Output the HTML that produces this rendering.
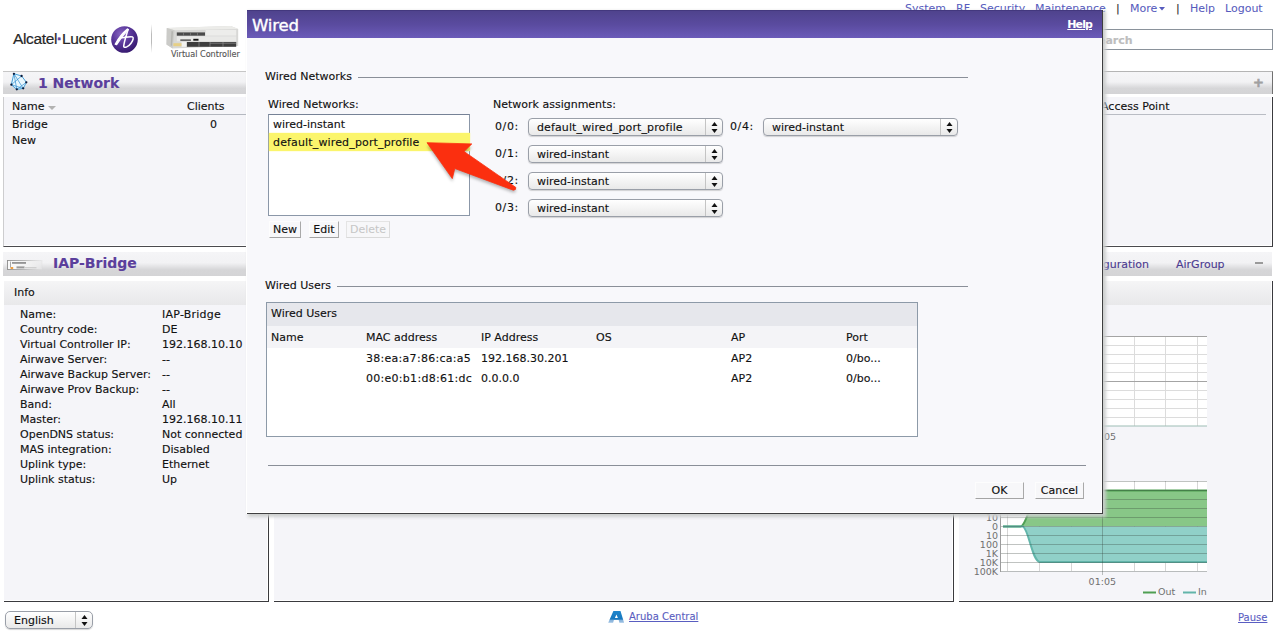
<!DOCTYPE html>
<html lang="en">
<head>
<meta charset="utf-8">
<title>Wired</title>
<style>
html,body{margin:0;padding:0;}
body{width:1277px;height:634px;position:relative;overflow:hidden;background:#fff;
 font-family:"DejaVu Sans","Liberation Sans",sans-serif;font-size:11px;color:#111;line-height:13px;-webkit-text-stroke:.13px;}
.abs{position:absolute;}
.t{position:absolute;white-space:nowrap;margin-top:1px;}
a{color:#4f50b4;}
/* top nav */
.nav{color:#565bbd;font-size:11px;-webkit-text-stroke:.05px;}
.sep{color:#333;font-size:11px;}
/* section headers */
.hdr{position:absolute;height:23px;box-sizing:border-box;border-top:1px solid #c6c6c6;background:linear-gradient(to bottom,#f5f5f7 0%,#f2f2f4 45%,#d6d6d8 74%,#d4d4d6 100%);}
.hdr .ttl{position:absolute;font-weight:bold;font-size:14px;color:#5b3f9c;top:4px;line-height:14px;white-space:nowrap;}
.panel{position:absolute;background:#f5f5f9;box-sizing:border-box;}
.sub{position:absolute;left:0;right:1px;top:0;height:24px;background:linear-gradient(to bottom,#f5f5f6,#e8e8ea);}
/* modal */
#modal{position:absolute;left:247px;top:10px;width:856px;height:504px;box-sizing:border-box;background:#f8f8fb;
 border-right:1px solid #3e3e40;border-bottom:1px solid #3e3e40;
 box-shadow:inset -1px -1px 0 #fff, -1px 0 0 #fff, 2px 2px 3px 1px rgba(203,205,204,.95);}
#mh{position:absolute;left:0;top:0;right:0;height:28px;box-sizing:border-box;border-top:1px solid #43387e;background:linear-gradient(to bottom,#4f438d 0%,#5a4b9f 50%,#6b5bb9 100%);}
#mh .ttl{position:absolute;left:5px;top:6.5px;font-size:16.6px;line-height:16px;color:#fff;-webkit-text-stroke:.35px #fff;letter-spacing:-.2px;}
#mh .help{position:absolute;right:10px;top:7px;font-weight:bold;color:#fff;text-decoration:underline;font-size:11px;letter-spacing:-.9px;-webkit-text-stroke:0;}
.fl{position:absolute;height:1px;background:#8a8f98;}
.sel{position:absolute;height:17px;box-sizing:border-box;border:1px solid #9a9fa8;border-radius:4px;
 background:linear-gradient(to bottom,#ffffff,#e9e9e9);box-shadow:0 1px 1px rgba(0,0,0,.16);}
.sel span{position:absolute;left:8px;top:2px;line-height:13px;white-space:nowrap;}
.sel i{position:absolute;right:16px;top:0;bottom:0;width:1px;background:#c4c4c4;}
.sel svg{position:absolute;right:4px;top:3px;}
.btn{position:absolute;height:17px;box-sizing:border-box;border:1px solid;border-color:#fdfdfd #a9a9a9 #a4a4a4 #fdfdfd;background:#f7f7f9;
 text-align:center;line-height:15px;}
</style>
</head>
<body>

<!-- ===== top navigation ===== -->
<div class="t nav" style="left:905px;top:1px;">System</div>
<div class="t nav" style="left:956px;top:1px;">RF</div>
<div class="t nav" style="left:980px;top:1px;">Security</div>
<div class="t nav" style="left:1035px;top:1px;">Maintenance</div>
<div class="t sep" style="left:1116px;top:1px;">|</div>
<div class="t nav" style="left:1130px;top:1px;">More</div>
<svg class="abs" style="left:1159px;top:7px" width="6" height="4"><path d="M0 0h6l-3 3.5z" fill="#565bbd"/></svg>
<div class="t sep" style="left:1176px;top:1px;">|</div>
<div class="t nav" style="left:1190px;top:1px;">Help</div>
<div class="t nav" style="left:1225px;top:1px;">Logout</div>

<!-- search -->
<div class="abs" style="left:1040px;top:29px;width:233px;height:21px;box-sizing:border-box;border:1px solid #8a929b;background:#fff;"></div>
<div class="t" style="left:1090px;top:33px;font-weight:bold;color:#bdbdbd;font-size:11px;">Search</div>

<!-- ===== logo ===== -->
<div class="t" id="logo" style="left:13px;top:28px;font-family:'Liberation Sans',sans-serif;font-size:15.5px;line-height:20px;color:#262626;letter-spacing:-0.35px;-webkit-text-stroke:.2px;">Alcatel<span style="color:#5b3f9c;font-weight:bold;-webkit-text-stroke:.5px #5b3f9c;">·</span>Lucent</div>
<svg class="abs" style="left:111px;top:26px" width="27" height="27" viewBox="0 0 27 27">
 <defs><radialGradient id="lg" cx="38%" cy="30%" r="75%"><stop offset="0" stop-color="#8a68c4"/><stop offset=".45" stop-color="#5b399c"/><stop offset="1" stop-color="#34176c"/></radialGradient></defs>
 <circle cx="13.5" cy="13.5" r="13.3" fill="url(#lg)"/>
 <path d="M4.2 18.2 L5.6 18.6 C9 13 13 8 17.4 3.6 L16.4 3 C11.5 7 7.5 12 4.2 18.2Z" fill="#fff" stroke="#fff" stroke-width="1.3" stroke-linejoin="round"/>
 <path d="M17 3.6 C15.5 9 13 16 12.7 20.3 C13 22.3 17 21.5 20 17.2 C22 14.2 23 11.6 21.5 10.9 C19 10.2 13 11.6 9.5 12" stroke="#fff" stroke-width="1.5" fill="none" stroke-linecap="round"/>
</svg>
<div class="abs" style="left:151px;top:24px;width:1px;height:29px;background:linear-gradient(to bottom,#fff,#bbb 35%,#bbb 65%,#fff);"></div>
<!-- controller image -->
<svg class="abs" style="left:166px;top:25px" width="74" height="25" viewBox="0 0 74 25">
 <path d="M.8 2.9 L64.8 .9 L72.2 4.1 L72.2 21.1 L6.7 23.4 L.5 19.4Z" fill="#d8d8d6"/>
 <path d="M.8 2.9 L64.8 .9 L72.2 4.1 L8.5 5.3Z" fill="#ecece9"/>
 <path d="M.8 2.9 L8.5 5.3 L6.7 23.4 L.5 19.4Z" fill="#cbcbc8"/>
 <path d="M5.5 6 L7 6.4 L6 21 L4.7 20.2Z" fill="#b4b4b0"/>
 <rect x="39.6" y="4.9" width="30.6" height="5.7" fill="#ededeb"/>
 <rect x="10.8" y="7.4" width="28.2" height="3.3" fill="#4a4a4a"/>
 <path d="M17.5 7.4v3.3M24.5 7.4v3.3M31.5 7.4v3.3" stroke="#8a8a8a" stroke-width=".6"/>
 <rect x="10.8" y="11.3" width="59.4" height="5" fill="#e9e9e7"/>
 <rect x="14.3" y="14.3" width="10.6" height="1.7" fill="#666"/>
 <rect x="27.3" y="13.8" width="5.2" height="1.9" fill="#151515"/>
 <rect x="20.8" y="17" width="49.4" height="4.8" fill="#3e3e3e"/>
 <path d="M44 18.2H70" stroke="#777" stroke-width="1"/>
 <path d="M33 17v4.8M44 17v4.8M57 17v4.8" stroke="#8d8d8d" stroke-width=".7"/>
 <rect x="15.5" y="17" width="5" height="4.8" fill="#f3f3f1"/>
 <rect x="7.3" y="18.2" width="8.2" height="3" fill="#e6cf86"/>
</svg>
<div class="t" style="left:171px;top:48px;font-size:8.1px;color:#555;line-height:11px;">Virtual Controller</div>

<!-- ===== Network panel ===== -->
<div class="hdr" style="left:3px;top:71px;width:950px;"><span class="ttl" style="left:35px;">1 Network</span></div>
<svg class="abs" style="left:9px;top:72px" width="20" height="20" viewBox="0 0 20 20">
 <path d="M4.9 1.7L12.6 4L17.4 10.3L14.2 16.4L7.8 17.4L2.3 12.7Z" fill="#e9f7fd" stroke="#3498d8" stroke-width=".9"/>
 <g stroke="#2f8ed0" stroke-width=".7" fill="none"><path d="M4.9 1.7L14.2 16.4M4.9 1.7L7.8 17.4M12.6 4L2.3 12.7M2.3 12.7L14.2 16.4M17.4 10.3L7.8 17.4"/></g>
 <g fill="#0b1a3a"><circle cx="4.9" cy="1.8" r="1.15"/><circle cx="12.6" cy="4" r="1.15"/><circle cx="17.3" cy="10.3" r="1.15"/><circle cx="14.2" cy="16.3" r="1.15"/><circle cx="7.8" cy="17.3" r="1.15"/><circle cx="2.4" cy="12.7" r="1.15"/></g>
</svg>
<div class="panel" style="left:3px;top:97px;width:951px;height:150px;border-left:1px solid #cdcdcf;border-right:1px solid #3a3a3e;border-bottom:1px solid #4a4a4e;box-shadow:inset -1px -1px 0 #fff;"></div>
<div class="t" style="left:12px;top:99px;">Name</div>
<svg class="abs" style="left:48px;top:106px" width="8" height="5"><path d="M0 0h8l-4 4z" fill="#b2b2b2"/></svg>
<div class="t" style="left:187px;top:99px;">Clients</div>
<div class="abs" style="left:10px;top:114px;width:941px;height:1px;background:#b4b8c0;"></div>
<div class="t" style="left:12px;top:117px;">Bridge</div>
<div class="t" style="left:210px;top:117px;">0</div>
<div class="t" style="left:12px;top:133px;">New</div>

<!-- ===== Access points panel (right, mostly hidden) ===== -->
<div class="hdr" style="left:959px;top:71px;width:314px;border-right:1px solid #707070;border-top-color:#b4b4b4;"></div>
<div class="t" style="left:1253px;top:74px;font-size:13px;color:#a0a0a0;font-weight:bold;line-height:16px;-webkit-text-stroke:.6px #a0a0a0;">+</div>
<div class="panel" style="left:959px;top:97px;width:314px;height:150px;border-right:1px solid #3a3a3e;border-bottom:1px solid #4a4a4e;box-shadow:inset -1px -1px 0 #fff;"></div>
<div class="t" style="left:1101px;top:99px;">Access Point</div>
<div class="abs" style="left:1100px;top:114px;width:166px;height:1px;background:#b9bcc4;"></div>

<!-- ===== IAP header ===== -->
<div class="hdr" style="left:3px;top:252px;width:1269px;height:24px;border-top:0;"><span class="ttl" style="left:50px;">IAP-Bridge</span></div>
<svg class="abs" style="left:7px;top:259px" width="36" height="12" viewBox="0 0 36 12">
 <defs><linearGradient id="ap" x1="0" x2="1" y1="0" y2="0"><stop offset="0" stop-color="#fafafa"/><stop offset=".6" stop-color="#f2f2f2"/><stop offset="1" stop-color="#e9e9ea" stop-opacity=".6"/></linearGradient>
 <linearGradient id="apb" x1="0" x2="1" y1="0" y2="0"><stop offset="0" stop-color="#8c8c8c"/><stop offset=".5" stop-color="#b5b5b5"/><stop offset="1" stop-color="#d5d5d5" stop-opacity=".3"/></linearGradient></defs>
 <rect x=".5" y="1.5" width="34.5" height="9" fill="url(#ap)" stroke="url(#apb)" stroke-width=".9"/>
 <rect x="3" y="2.6" width="1" height="6" fill="#aaa"/>
 <rect x="5" y="3.4" width="14" height="1.1" fill="#555"/><rect x="9.5" y="7.4" width="8" height="2" fill="#9a9a9a"/><rect x="17.5" y="8" width="12" height="1.4" fill="#cfcfcf"/><rect x="3.6" y="8" width="2.6" height="2" fill="#f0a040"/>
</svg>
<div class="t" style="right:128px;top:257px;color:#4c3b90;">Configuration</div>
<div class="t" style="left:1176px;top:257px;color:#4c3b90;">AirGroup</div>
<div class="abs" style="left:1255px;top:262px;width:8px;height:2px;background:#9a9a9a;"></div>

<!-- ===== Info panel ===== -->
<div class="panel" style="left:4px;top:281px;width:265px;height:321px;border-right:1px solid #3a3a3e;border-bottom:1px solid #3a3a3e;box-shadow:inset -1px -1px 0 #fff;"><div class="sub"></div></div>
<div class="t" style="left:14px;top:285px;">Info</div>
<div class="t" style="left:20px;top:306px;line-height:15px;white-space:pre;">Name:
Country code:
Virtual Controller IP:
Airwave Server:
Airwave Backup Server:
Airwave Prov Backup:
Band:
Master:
OpenDNS status:
MAS integration:
Uplink type:
Uplink status:</div>
<div class="t" style="left:162px;top:306px;line-height:15px;white-space:pre;"><span style="letter-spacing:.25px">IAP-Bridge</span>
DE
192.168.10.10
--
--
--
All
192.168.10.11
Not connected
Disabled
Ethernet
Up</div>

<!-- ===== middle panel ===== -->
<div class="panel" style="left:274px;top:281px;width:680px;height:321px;border-right:1px solid #3a3a3e;border-bottom:1px solid #3a3a3e;box-shadow:inset -1px -1px 0 #fff;"><div class="sub"></div></div>

<!-- ===== right panel with charts ===== -->
<div class="panel" style="left:959px;top:281px;width:314px;height:321px;border-right:1px solid #3a3a3e;border-bottom:1px solid #3a3a3e;box-shadow:inset -1px -1px 0 #fff;"><div class="sub"></div></div>
<svg class="abs" style="left:958px;top:320px" width="315" height="282" viewBox="958 320 315 282" font-family="DejaVu Sans, Liberation Sans, sans-serif" style="-webkit-text-stroke:0">
 <!-- chart 1 -->
 <rect x="1001" y="336" width="206" height="90" fill="#fff"/>
 <g stroke="#dcdcdc" stroke-width="1">
  <path d="M1001 345.5H1207M1001 354.5H1207M1001 363.5H1207M1001 372.5H1207M1001 390.5H1207M1001 399.5H1207M1001 408.5H1207M1001 417.5H1207"/>
  <path d="M1134.5 336V426M1165.5 336V426M1197.5 336V426"/>
 </g>
 <path d="M1001 336.5H1207M1001 381.5H1207" stroke="#a4a4a4" stroke-width="1"/>
 <path d="M1102.5 336V430" stroke="#8a8a8a" stroke-width="1"/>
 <path d="M1001 426H1207" stroke="#9dbdb6" stroke-width="1.2"/>
 <text x="1102.3" y="440" font-size="9.5" fill="#707070" text-anchor="middle">01:05</text>
 <!-- chart 2 -->
 <rect x="1001" y="481" width="206" height="90" fill="#fff"/>
 <g stroke="#d6d6d6" stroke-width="1">
  <path d="M1007.5 481V571M1039.5 481V571M1071.5 481V571M1134.5 481V571M1165.5 481V571M1197.5 481V571"/>
 </g>
 <path d="M1003 526.5 L1020.5 526.5 C1024 526 1026 518 1028.5 513 S1033 490.5 1037 490.5 L1207 490.5 L1207 526.5 Z" fill="#88c787"/>
 <path d="M1003 526.5 L1023 526.5 C1029 530 1032 561 1040 562 L1207 562 L1207 526.5 Z" fill="#90d0c8"/>
 <path d="M1003 526.5 L1020.5 526.5 C1024 526 1026 518 1028.5 513 S1033 490.5 1037 490.5 L1207 490.5" fill="none" stroke="#4f9f53" stroke-width="2"/>
 <path d="M1003 526.5 L1023 526.5 C1029 530 1032 561 1040 562 L1207 562" fill="none" stroke="#62b5aa" stroke-width="2"/>
 <path d="M1000.5 481V572" stroke="#9c9c9c" stroke-width="1"/>
 <g stroke="rgba(45,55,50,.3)" stroke-width="1">
  <path d="M1001 481.5H1207M1001 490.5H1207M1001 499.5H1207M1001 508.5H1207M1001 517.5H1207M1001 526.5H1207M1001 535.5H1207M1001 544.5H1207M1001 553.5H1207M1001 562.5H1207M1001 571.5H1207"/>
  <path d="M1102.5 481V575"/>
 </g>
 <g font-size="9.5" fill="#707070" text-anchor="end">
  <text x="998" y="521">10</text><text x="998" y="530">0</text><text x="998" y="539">10</text><text x="998" y="548">100</text><text x="998" y="557">1K</text><text x="998" y="566">10K</text><text x="998" y="575">100K</text>
 </g>
 <text x="1102.3" y="585" font-size="9.5" fill="#707070" text-anchor="middle">01:05</text>
 <path d="M1143 592.5H1156" stroke="#4f9f53" stroke-width="2"/><text x="1158" y="595.2" font-size="9.5" fill="#707070">Out</text>
 <path d="M1183 592.5H1196" stroke="#62b5aa" stroke-width="2"/><text x="1198" y="595.2" font-size="9.5" fill="#707070">In</text>
</svg>

<!-- ===== footer ===== -->
<div class="sel" style="left:5px;top:611px;width:88px;height:18px;border-radius:5px;"><span>English</span><i></i>
 <svg width="7" height="11" viewBox="0 0 7 11"><path d="M3.5 0L6.5 4H.5zM3.5 11L6.5 7H.5z" fill="#111"/></svg></div>
<svg class="abs" style="left:608px;top:610px" width="17" height="14" viewBox="0 0 17 14"><defs><linearGradient id="ag" x1="0" x2="0" y1="0" y2="1"><stop offset="0" stop-color="#1f86cc"/><stop offset=".7" stop-color="#1878bf"/><stop offset=".78" stop-color="#86b3dc"/><stop offset="1" stop-color="#9cc0e2"/></linearGradient></defs><path d="M5.4 1H12.5L16.1 12.7H11.4L10.7 10H5.9L5.1 12.7H.2ZM8.4 4.4L6.9 8H9.9Z" fill="url(#ag)" fill-rule="evenodd"/></svg>
<a class="t" style="left:629px;top:609px;color:#595dc0;text-decoration:underline;font-size:10px;-webkit-text-stroke:.1px;">Aruba Central</a>
<a class="t" style="left:1238px;top:610px;color:#5a5ec2;text-decoration:underline;font-size:10px;-webkit-text-stroke:.1px;">Pause</a>

<!-- ===== MODAL ===== -->
<div id="modal">
 <div id="mh"><span class="ttl">Wired</span><span class="help">Help</span></div>

 <div class="t" style="left:18px;top:59px;">Wired Networks</div>
 <div class="fl" style="left:111px;top:67px;width:610px;"></div>
 <div class="t" style="left:21px;top:87px;">Wired Networks:</div>
 <div class="abs" style="left:21px;top:104px;width:202px;height:102px;box-sizing:border-box;border:1px solid #8b97a8;border-top-color:#768296;background:#fff;"></div>
 <div class="t" style="left:26px;top:107px;">wired-instant</div>
 <div class="abs" style="left:22px;top:123px;width:201px;height:18px;background:#fbf56c;box-shadow:0 0 1px #fbf56c;"></div>
 <div class="t" style="left:26px;top:125px;letter-spacing:.15px;">default_wired_port_profile</div>
 <div class="btn" style="left:22px;top:211px;width:32px;">New</div>
 <div class="btn" style="left:62px;top:211px;width:30px;">Edit</div>
 <div class="btn" style="left:99px;top:211px;width:44px;color:#c6c6c6;border-color:#e4e4e4 #dcdcdc #dadada #e4e4e4;-webkit-text-stroke:0;">Delete</div>

 <div class="t" style="left:246px;top:87px;">Network assignments:</div>
 <div class="t" style="left:248px;top:109px;letter-spacing:.6px;">0/0:</div>
 <div class="sel" style="left:281px;top:108px;width:195px;height:18px;"><span style="letter-spacing:.12px">default_wired_port_profile</span><i></i><svg width="7" height="11" viewBox="0 0 7 11"><path d="M3.5 0L6.5 4H.5zM3.5 11L6.5 7H.5z" fill="#111"/></svg></div>
 <div class="t" style="left:483px;top:109px;letter-spacing:.6px;">0/4:</div>
 <div class="sel" style="left:516px;top:108px;width:195px;height:18px;"><span>wired-instant</span><i></i><svg width="7" height="11" viewBox="0 0 7 11"><path d="M3.5 0L6.5 4H.5zM3.5 11L6.5 7H.5z" fill="#111"/></svg></div>
 <div class="t" style="left:248px;top:136px;letter-spacing:.6px;">0/1:</div>
 <div class="sel" style="left:281px;top:135px;width:195px;height:18px;"><span>wired-instant</span><i></i><svg width="7" height="11" viewBox="0 0 7 11"><path d="M3.5 0L6.5 4H.5zM3.5 11L6.5 7H.5z" fill="#111"/></svg></div>
 <div class="t" style="left:248px;top:163px;letter-spacing:.6px;">0/2:</div>
 <div class="sel" style="left:281px;top:162px;width:195px;height:18px;"><span>wired-instant</span><i></i><svg width="7" height="11" viewBox="0 0 7 11"><path d="M3.5 0L6.5 4H.5zM3.5 11L6.5 7H.5z" fill="#111"/></svg></div>
 <div class="t" style="left:248px;top:190px;letter-spacing:.6px;">0/3:</div>
 <div class="sel" style="left:281px;top:189px;width:195px;height:18px;"><span>wired-instant</span><i></i><svg width="7" height="11" viewBox="0 0 7 11"><path d="M3.5 0L6.5 4H.5zM3.5 11L6.5 7H.5z" fill="#111"/></svg></div>

 <!-- red arrow -->
 <svg class="abs" style="left:170px;top:120px;overflow:visible" width="110" height="80" viewBox="170 120 110 80">
  <defs><filter id="ash" x="-20%" y="-20%" width="140%" height="150%"><feGaussianBlur stdDeviation="1.6"/></filter></defs>
  <path d="M180 135.7 L224.8 136.9 L217 144.5 L268.8 179.6 Q269.3 182.6 266.3 182.6 L207.8 161.5 L205.3 171.6 Z" fill="rgba(0,0,0,.28)" filter="url(#ash)"/>
  <path d="M180 132.7 L224.8 133.9 L217 141.5 L268.8 177.4 Q269.3 180.2 266.3 180.2 L207.8 158.5 L205.3 168.6 Z" fill="#fb2f0f" stroke="#fb2f0f" stroke-width=".8" stroke-linejoin="round"/>
 </svg>

 <div class="t" style="left:18px;top:268px;">Wired Users</div>
 <div class="fl" style="left:90px;top:276px;width:631px;"></div>
 <div class="abs" style="left:19px;top:292px;width:652px;height:135px;box-sizing:border-box;border:1px solid #8d9aa8;background:#fff;"></div>
 <div class="abs" style="left:20px;top:293px;width:650px;height:23px;background:#e6e7ec;"></div>
 <div class="abs" style="left:20px;top:316px;width:650px;height:22px;background:#f4f4f7;"></div>
 <div class="t" style="left:24px;top:296px;">Wired Users</div>
 <div class="t" style="left:24px;top:320px;">Name</div>
 <div class="t" style="left:119px;top:320px;">MAC address</div>
 <div class="t" style="left:234px;top:320px;">IP Address</div>
 <div class="t" style="left:349px;top:320px;">OS</div>
 <div class="t" style="left:484px;top:320px;">AP</div>
 <div class="t" style="left:599px;top:320px;">Port</div>
 <div class="t" style="left:119px;top:341px;letter-spacing:.28px;">38:ea:a7:86:ca:a5</div>
 <div class="t" style="left:234px;top:341px;">192.168.30.201</div>
 <div class="t" style="left:484px;top:341px;">AP2</div>
 <div class="t" style="left:599px;top:341px;">0/bo...</div>
 <div class="t" style="left:119px;top:361px;letter-spacing:.28px;">00:e0:b1:d8:61:dc</div>
 <div class="t" style="left:234px;top:361px;">0.0.0.0</div>
 <div class="t" style="left:484px;top:361px;">AP2</div>
 <div class="t" style="left:599px;top:361px;">0/bo...</div>

 <div class="fl" style="left:21px;top:455px;width:818px;"></div>
 <div class="btn" style="left:728px;top:472px;width:49px;">OK</div>
 <div class="btn" style="left:788px;top:472px;width:49px;">Cancel</div>
</div>

</body>
</html>
